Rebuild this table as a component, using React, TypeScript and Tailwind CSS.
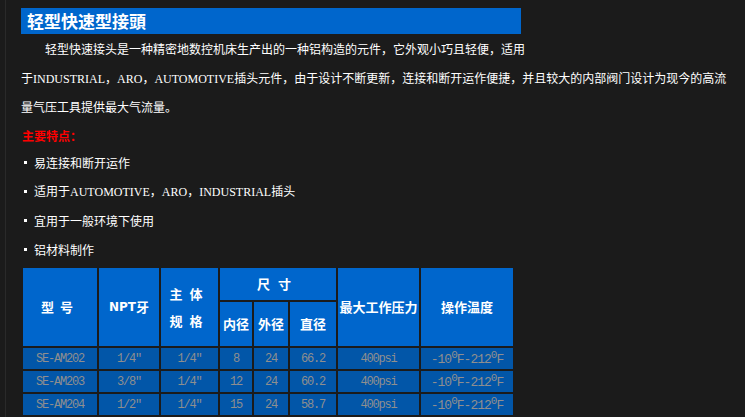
import React from 'react';

const font = "font-['Noto_Sans_CJK_SC',sans-serif]";
const serif = "font-['Liberation_Serif','Noto_Sans_CJK_SC',serif]";

const rows = [
  ['SE-AM202', '1/4″', '1/4″', '8', '24', '66.2'],
  ['SE-AM203', '3/8″', '1/4″', '12', '24', '60.2'],
  ['SE-AM204', '1/2″', '1/4″', '15', '24', '58.7'],
];

const Bullet: React.FC<{ children: React.ReactNode }> = ({ children }) => (
  <div className="flex h-[29px] items-center whitespace-nowrap leading-[29px]">
    <span className="ml-[3px] mr-[7px] h-[3px] w-[3px] bg-white" />
    <span>{children}</span>
  </div>
);

const Head: React.FC<{ className?: string; children: React.ReactNode }> = ({ className = '', children }) => (
  <div className={`flex items-center justify-center bg-[#0066cc] text-[13px] font-bold text-white ${className}`}>
    {children}
  </div>
);

const Cell: React.FC<{ children: React.ReactNode }> = ({ children }) => (
  <div className="flex items-center justify-center bg-[#0256a8] font-['Liberation_Mono',monospace] text-[12px] tracking-[-1.2px] text-[#8f8f8f]">
    {children}
  </div>
);

export default function App() {
  return (
    <div className={`flex h-[417px] w-[745px] overflow-hidden bg-[#1b1b1b] ${font} text-[12px] text-white`}>
      <div className="ml-[5px] w-px bg-[#2a2a2a]" />
      <div className="flex flex-col pl-[15px]">
        <div className="mt-[8px] flex h-[26px] w-[500px] items-center bg-[#0066cc] pl-[6px] text-[17px] font-bold">
          轻型快速型接頭
        </div>
        <div className="h-[29px] whitespace-nowrap pl-[24px] leading-[29px]">
          轻型快速接头是一种精密地数控机床生产出的一种铝构造的元件，它外观小巧且轻便，适用
        </div>
        <div className="h-[29px] whitespace-nowrap leading-[29px]">
          于<span className={serif}>INDUSTRIAL</span>，<span className={serif}>ARO</span>，<span className={serif}>AUTOMOTIVE</span>插头元件，由于设计不断更新，连接和断开运作便捷，并且较大的内部阀门设计为现今的高流
        </div>
        <div className="h-[29px] whitespace-nowrap leading-[29px]">量气压工具提供最大气流量。</div>
        <div className="h-[29px] whitespace-nowrap pl-[1px] font-bold leading-[29px] text-[#ff0000]">主要特点：</div>
        <div className="mt-[-2px]">
          <Bullet>易连接和断开运作</Bullet>
          <Bullet>
            适用于<span className={serif}>AUTOMOTIVE</span>，<span className={serif}>ARO</span>，<span className={serif}>INDUSTRIAL</span>插头
          </Bullet>
          <Bullet>宜用于一般环境下使用</Bullet>
          <Bullet>铝材料制作</Bullet>
        </div>
        <div className="mt-[2px] grid w-max grid-cols-[74px_60px_57px_32px_34px_46px_81px_92px] grid-rows-[32px_44px_21px_21px_21px] gap-[2px] p-[2px]">
          <Head className="row-span-2 tracking-[6px]">型号</Head>
          <Head className="row-span-2">
            <span className="font-['DejaVu_Sans',sans-serif] text-[12px]">NPT</span>牙
          </Head>
          <Head className="row-span-2 flex-col leading-[27px] tracking-[7px]">
            <span>主体</span>
            <span>规格</span>
          </Head>
          <Head className="col-span-3 tracking-[8px]">尺寸</Head>
          <Head className="row-span-2">最大工作压力</Head>
          <Head className="row-span-2">操作温度</Head>
          <Head>内径</Head>
          <Head>外径</Head>
          <Head>直径</Head>
          {rows.map((r) => (
            <React.Fragment key={r[0]}>
              {r.map((v, i) => (
                <Cell key={i}>{v}</Cell>
              ))}
              <Cell>400psi</Cell>
              <Cell>
                <span className="pt-[3px] text-[13px] tracking-[-1px]">
                  -10<sup className="text-[11px]">0</sup>F-212<sup className="text-[11px]">0</sup>F
                </span>
              </Cell>
            </React.Fragment>
          ))}
        </div>
      </div>
    </div>
  );
}
